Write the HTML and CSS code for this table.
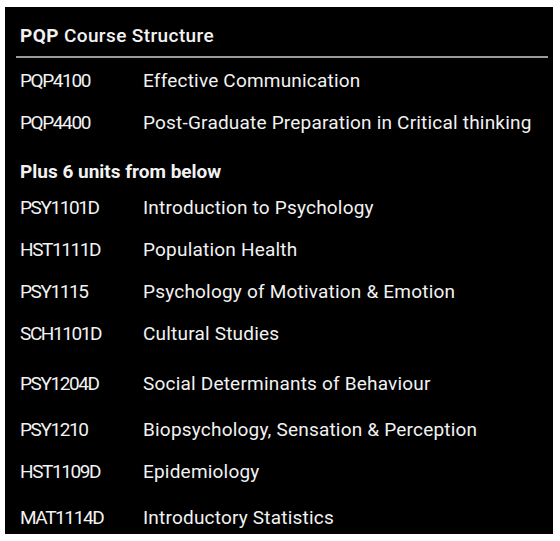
FILE: index.html
```html
<!DOCTYPE html>
<html>
<head>
<meta charset="utf-8">
<link rel="stylesheet" href="styles.css">
</head>
<body>
<div class="panel">
  <div class="title"><b>PQP</b> Course Structure</div>
  <div class="rule"></div>
  <div class="row"><span class="code">PQP4100</span><span class="name">Effective Communication</span></div>
  <div class="row"><span class="code">PQP4400</span><span class="name">Post-Graduate Preparation in Critical thinking</span></div>
  <div class="heading">Plus 6 units from below</div>
  <div class="row"><span class="code">PSY1101D</span><span class="name">Introduction to Psychology</span></div>
  <div class="row"><span class="code">HST1111D</span><span class="name">Population Health</span></div>
  <div class="row"><span class="code">PSY1115</span><span class="name">Psychology of Motivation &amp; Emotion</span></div>
  <div class="row"><span class="code">SCH1101D</span><span class="name">Cultural Studies</span></div>
  <div class="row row-gap-lg"><span class="code">PSY1204D</span><span class="name">Social Determinants of Behaviour</span></div>
  <div class="row row-gap-sm"><span class="code">PSY1210</span><span class="name">Biopsychology, Sensation &amp; Perception</span></div>
  <div class="row"><span class="code">HST1109D</span><span class="name">Epidemiology</span></div>
  <div class="row row-gap-sm"><span class="code">MAT1114D</span><span class="name">Introductory Statistics</span></div>
</div>
</body>
</html>
```
FILE: styles.css
```css
html, body {
  margin: 0;
  padding: 0;
  background: #ffffff;
}
.panel {
  margin: 7px 0 0 5px;
  width: 548px;
  height: 527px;
  background: #000000;
  color: #f2f2f2;
  font-family: Roboto, "Liberation Sans", sans-serif;
  font-size: 19px;
  overflow: hidden;
  box-sizing: border-box;
  padding-left: 15px;
}
.title {
  padding-top: 17px;
  line-height: 24px;
  font-weight: 500;
  height: 24px;
  margin-bottom: 8px;
  letter-spacing: 0.4px;
}
.title b {
  font-weight: 700;
}
.rule {
  height: 2px;
  background: #9a9a9a;
  margin-left: -4px;
  margin-right: 5px;
  margin-bottom: 2px;
}
.row {
  display: grid;
  grid-template-columns: 123px 1fr;
  height: 42px;
  line-height: 42px;
  white-space: nowrap;
}
.code {
  letter-spacing: -1.4px;
}
.name {
  letter-spacing: 0.2px;
}
.row:nth-of-type(1), .row:nth-of-type(2) {
  height: 43px;
  line-height: 43px;
}
.row-gap-lg {
  padding-top: 8px;
}
.row-gap-sm {
  padding-top: 4px;
}
.heading {
  padding-top: 13px;
  line-height: 30px;
  height: 30px;
  font-weight: 700;
}
```
